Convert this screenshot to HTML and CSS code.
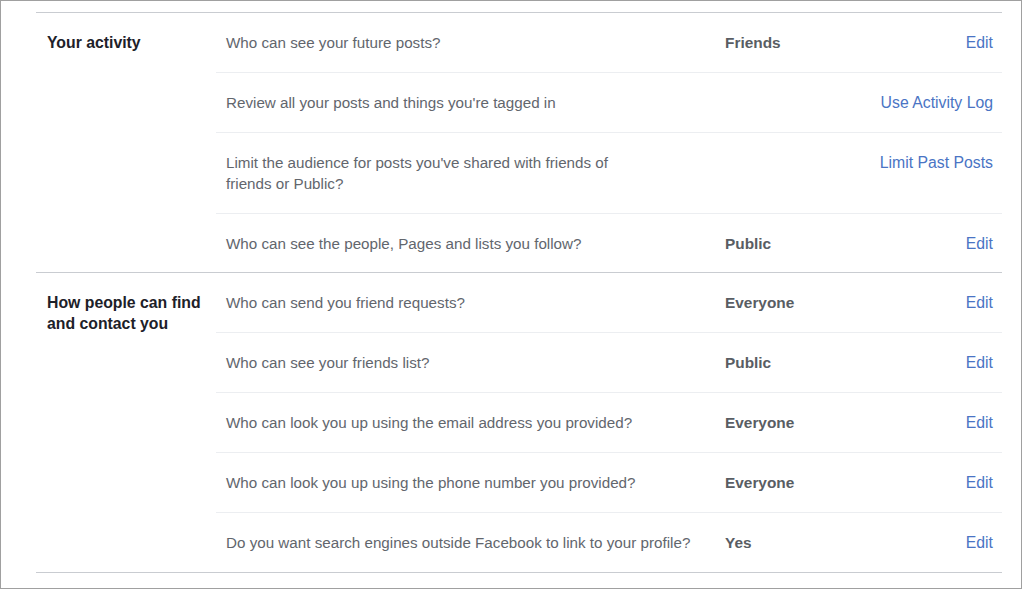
FILE: index.html
```html
<!DOCTYPE html>
<html lang="en">
<head>
  <meta charset="UTF-8" />
  <title>Privacy Settings and Tools</title>
  <link rel="stylesheet" href="styles.css">
</head>
<body>
  <div class="frame">
    <div class="settings">

      <div class="section">
        <div class="section-title">Your activity</div>
        <div class="rows">
          <div class="row">
            <div class="label">Who can see your future posts?</div>
            <div class="value">Friends</div>
            <a class="action" href="#">Edit</a>
          </div>
          <div class="row">
            <div class="label">Review all your posts and things you're tagged in</div>
            <div class="value"></div>
            <a class="action" href="#">Use Activity Log</a>
          </div>
          <div class="row">
            <div class="label narrow">Limit the audience for posts you've shared with friends of friends or Public?</div>
            <div class="value"></div>
            <a class="action" href="#">Limit Past Posts</a>
          </div>
          <div class="row short">
            <div class="label">Who can see the people, Pages and lists you follow?</div>
            <div class="value">Public</div>
            <a class="action" href="#">Edit</a>
          </div>
        </div>
      </div>

      <div class="section">
        <div class="section-title">How people can find and contact you</div>
        <div class="rows">
          <div class="row">
            <div class="label">Who can send you friend requests?</div>
            <div class="value">Everyone</div>
            <a class="action" href="#">Edit</a>
          </div>
          <div class="row">
            <div class="label">Who can see your friends list?</div>
            <div class="value">Public</div>
            <a class="action" href="#">Edit</a>
          </div>
          <div class="row">
            <div class="label">Who can look you up using the email address you provided?</div>
            <div class="value">Everyone</div>
            <a class="action" href="#">Edit</a>
          </div>
          <div class="row">
            <div class="label">Who can look you up using the phone number you provided?</div>
            <div class="value">Everyone</div>
            <a class="action" href="#">Edit</a>
          </div>
          <div class="row">
            <div class="label">Do you want search engines outside Facebook to link to your profile?</div>
            <div class="value">Yes</div>
            <a class="action" href="#">Edit</a>
          </div>
        </div>
      </div>

    </div>
  </div>
</body>
</html>
```

FILE: styles.css
```css
body {
  margin: 0;
  font-family: "Liberation Sans", Arial, sans-serif;
  font-size: 15px;
  line-height: 21px;
  background: #fff;
}

.frame {
  width: 1020px;
  height: 587px;
  border: 1px solid #a0a0a0;
  background: #fff;
}

.settings {
  width: 966px;
  margin: 11px 0 0 35px;
  border-bottom: 1px solid #c9ccd1;
}

.section {
  display: grid;
  grid-template-columns: 180px 1fr;
  border-top: 1px solid #c9ccd1;
}

.section-title {
  padding: 19px 10px 0 11px;
  font-size: 15.8px;
  font-weight: bold;
  color: #1d2129;
}

.row {
  display: grid;
  grid-template-columns: 499px 1fr auto;
  padding: 19px 9px 19px 10px;
  border-top: 1px solid #eceef1;
}

.row:first-child {
  border-top: none;
}

.row.short {
  padding-bottom: 18px;
}

.label {
  font-size: 15.2px;
  color: #62666d;
}

.label.narrow {
  max-width: 410px;
}

.value {
  font-size: 15.4px;
  font-weight: bold;
  color: #595d63;
}

.action {
  font-size: 15.8px;
  color: #4a74c4;
  text-decoration: none;
}
```
